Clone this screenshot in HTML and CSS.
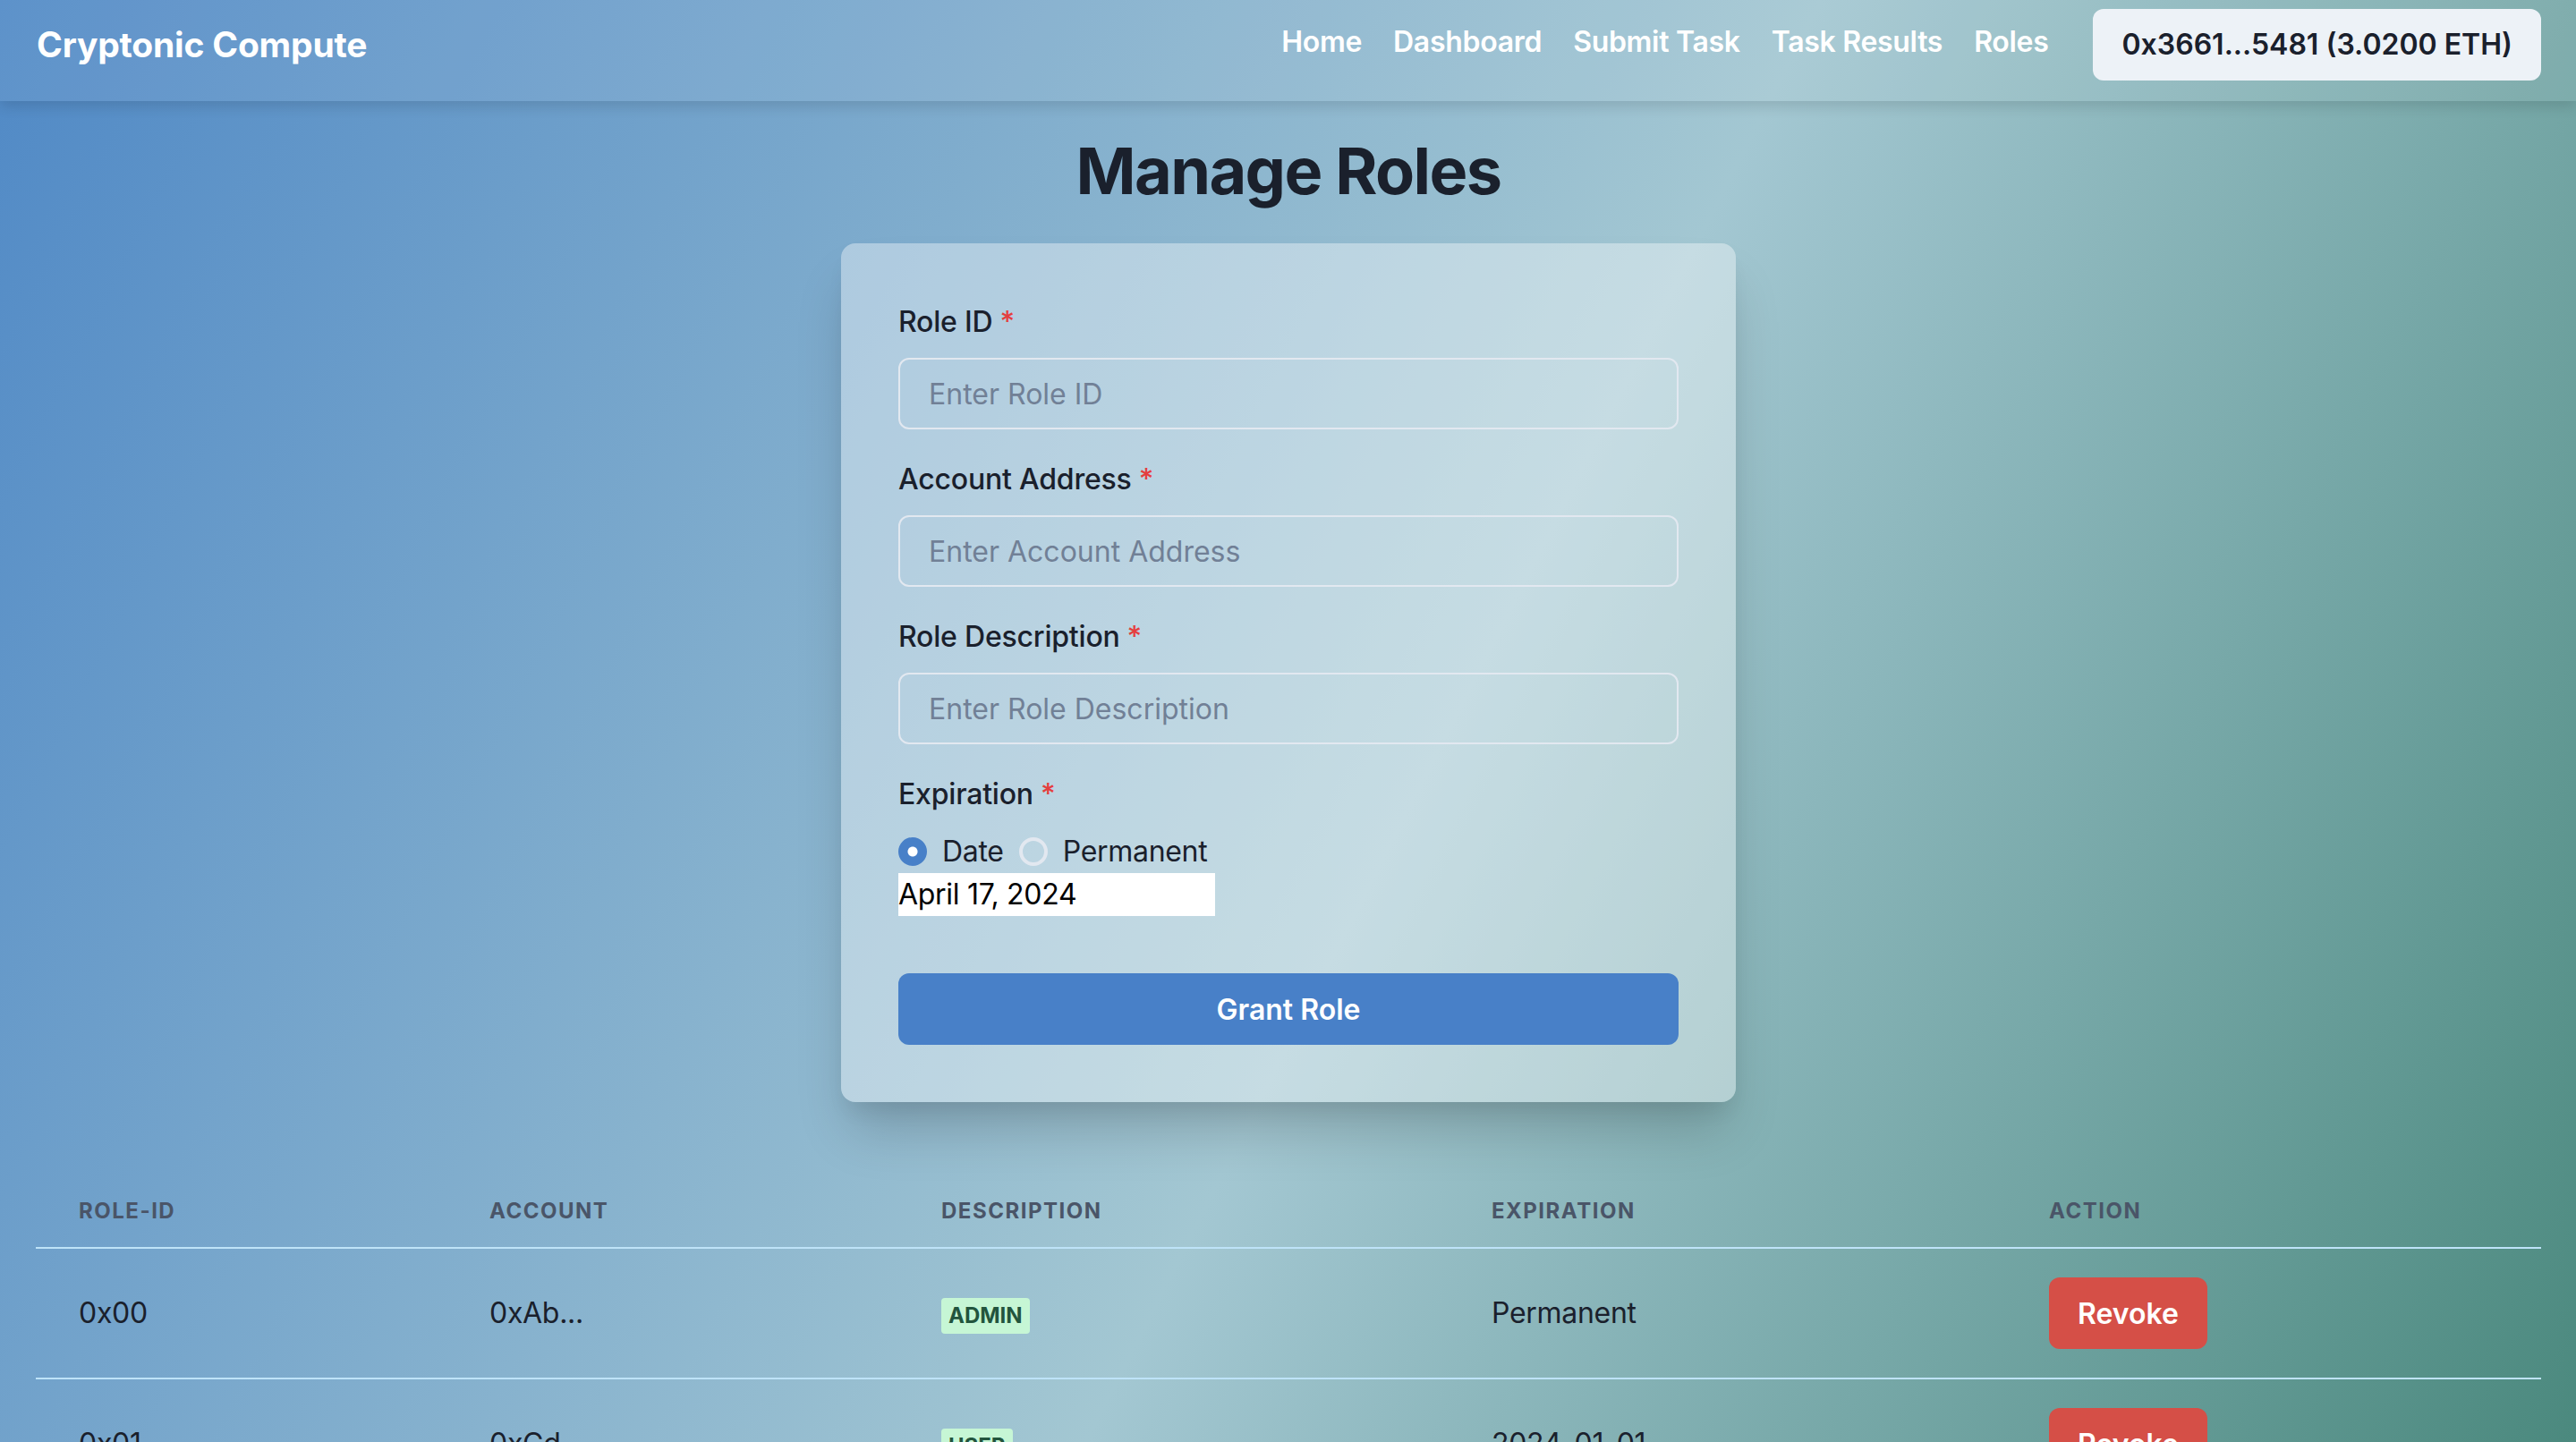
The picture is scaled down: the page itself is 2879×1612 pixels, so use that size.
FILE: index.html
```html
<!DOCTYPE html>
<html lang="en">
<head>
<meta charset="utf-8">
<title>Cryptonic Compute - Manage Roles</title>
<link rel="stylesheet" href="styles.css">
</head>
<body>
<header class="topbar">
  <div class="brand">Cryptonic Compute</div>
  <div class="topbar-right">
    <nav class="nav">
      <a class="nav-link" href="#">Home</a>
      <a class="nav-link" href="#">Dashboard</a>
      <a class="nav-link" href="#">Submit Task</a>
      <a class="nav-link" href="#">Task Results</a>
      <a class="nav-link" href="#">Roles</a>
    </nav>
    <button class="wallet-btn">0x3661...5481 (3.0200 ETH)</button>
  </div>
</header>

<main class="page">
  <h1 class="page-title">Manage Roles</h1>

  <form class="card">
    <div class="field">
      <label class="field-label">Role ID<span class="req">*</span></label>
      <input class="text-input" type="text" placeholder="Enter Role ID">
    </div>
    <div class="field">
      <label class="field-label">Account Address<span class="req">*</span></label>
      <input class="text-input" type="text" placeholder="Enter Account Address">
    </div>
    <div class="field">
      <label class="field-label">Role Description<span class="req">*</span></label>
      <input class="text-input" type="text" placeholder="Enter Role Description">
    </div>
    <div class="field">
      <label class="field-label">Expiration<span class="req">*</span></label>
      <div class="radio-row">
        <span class="radio-item"><span class="radio radio-checked"></span><span class="radio-text">Date</span></span>
        <span class="radio-item"><span class="radio"></span><span class="radio-text">Permanent</span></span>
      </div>
      <div class="date-input">April 17, 2024</div>
    </div>
    <button type="button" class="primary-btn">Grant Role</button>
  </form>

  <table class="roles-table">
    <colgroup>
      <col class="col-id">
      <col class="col-account">
      <col class="col-desc">
      <col class="col-exp">
      <col class="col-action">
    </colgroup>
    <thead>
      <tr>
        <th>Role-ID</th>
        <th>Account</th>
        <th>Description</th>
        <th>Expiration</th>
        <th>Action</th>
      </tr>
    </thead>
    <tbody>
      <tr>
        <td>0x00</td>
        <td>0xAb...</td>
        <td><span class="badge">Admin</span></td>
        <td>Permanent</td>
        <td><button type="button" class="revoke-btn">Revoke</button></td>
      </tr>
      <tr>
        <td>0x01</td>
        <td>0xCd...</td>
        <td><span class="badge">User</span></td>
        <td>2024-01-01</td>
        <td><button type="button" class="revoke-btn">Revoke</button></td>
      </tr>
    </tbody>
  </table>
</main>
</body>
</html>
```

FILE: styles.css
```css
* {
  box-sizing: border-box;
}

html, body {
  margin: 0;
  padding: 0;
}

body {
  min-height: 1612px;
  font-family: "Inter", "Noto Sans", "Liberation Sans", sans-serif;
  color: #1a202c;
  background: linear-gradient(117deg, #5089c6 0%, #a3c7d2 55%, #4b897e 100%);
  background-attachment: fixed;
  overflow: hidden;
}

/* ---------- top bar ---------- */
.topbar {
  display: flex;
  align-items: center;
  justify-content: space-between;
  height: 113px;
  padding: 10px 39px 24px 41px;
  background: rgba(255, 255, 255, 0.08);
  box-shadow: 0 6px 14px rgba(0, 0, 0, 0.12);
  position: relative;
  z-index: 2;
}

.brand {
  color: #ffffff;
  font-size: 39px;
  font-weight: 700;
  letter-spacing: -0.2px;
}

.topbar-right {
  display: flex;
  align-items: center;
}

.nav {
  display: flex;
  gap: 35px;
  margin-right: 50px;
  margin-bottom: 6px;
}

.nav-link {
  color: #ffffff;
  font-size: 32px;
  font-weight: 600;
  text-decoration: none;
  letter-spacing: -0.3px;
}

.wallet-btn {
  height: 80px;
  padding: 0 32px;
  border: none;
  border-radius: 12px;
  background: #edf2f7;
  color: #1a202c;
  font-family: inherit;
  font-size: 32px;
  font-weight: 600;
}

/* ---------- page ---------- */
.page {
  padding: 0 39px 0 40px;
}

.page-title {
  margin: 35px 0 38px;
  text-align: center;
  font-size: 72px;
  line-height: 1.2;
  font-weight: 700;
  color: #1a202c;
  letter-spacing: -1.6px;
}

/* ---------- card form ---------- */
.card {
  width: 1000px;
  margin: 0 auto;
  padding: 64px;
  display: flex;
  flex-direction: column;
  gap: 32px;
  background: rgba(255, 255, 255, 0.38);
  border-radius: 16px;
  box-shadow: 0 40px 60px -10px rgba(0, 0, 0, 0.18), 0 16px 24px -8px rgba(0, 0, 0, 0.08);
}

.field {
  display: flex;
  flex-direction: column;
  align-items: stretch;
}

.field-label {
  font-size: 32px;
  line-height: 48px;
  font-weight: 500;
  color: #1a202c;
  margin-bottom: 16px;
  letter-spacing: -0.2px;
}

.req {
  color: #e53e3e;
  margin-left: 8px;
}

.text-input {
  height: 80px;
  padding: 0 32px;
  border: 2px solid #e2e8f0;
  border-radius: 12px;
  background: transparent;
  font-family: inherit;
  font-size: 32px;
  color: #1a202c;
  outline: none;
}

.text-input::placeholder {
  color: #718096;
}

.radio-row {
  display: flex;
  align-items: center;
  gap: 17px;
  height: 48px;
}

.radio-item {
  display: flex;
  align-items: center;
  gap: 17px;
}

.radio {
  width: 32px;
  height: 32px;
  border-radius: 50%;
  border: 4px solid #e2e8f0;
  background: transparent;
  display: inline-block;
}

.radio-checked {
  border-color: #4880c8;
  background: radial-gradient(circle, #ffffff 0 5px, #4880c8 6px);
}

.radio-text {
  font-size: 32px;
  line-height: 48px;
  color: #1a202c;
  letter-spacing: -0.3px;
}

.date-input {
  width: 354px;
  height: 48px;
  line-height: 48px;
  background: #ffffff;
  font-size: 32px;
  color: #000000;
  padding: 0;
  letter-spacing: -0.3px;
}

.primary-btn {
  margin-top: 32px;
  height: 80px;
  border: none;
  border-radius: 12px;
  background: #4880c8;
  color: #ffffff;
  font-family: inherit;
  font-size: 32px;
  font-weight: 600;
}

/* ---------- table ---------- */
.roles-table {
  width: 100%;
  margin-top: 82px;
  border-collapse: collapse;
  table-layout: fixed;
}

.col-id { width: 459px; }
.col-account { width: 505px; }
.col-desc { width: 615px; }
.col-exp { width: 623px; }
.col-action { width: 598px; }

.roles-table th {
  padding: 24px 48px;
  text-align: left;
  font-size: 24px;
  line-height: 32px;
  font-weight: 700;
  letter-spacing: 1.5px;
  text-transform: uppercase;
  color: #4a5568;
  border-bottom: 2px solid #bee3f8;
}

.roles-table td {
  padding: 32px 48px;
  font-size: 32px;
  line-height: 48px;
  color: #1a202c;
  border-bottom: 2px solid #bee3f8;
  vertical-align: middle;
  letter-spacing: -0.3px;
}

.badge {
  display: inline-block;
  height: 40px;
  line-height: 40px;
  padding: 0 8px;
  border-radius: 4px;
  background: #c6f6d5;
  color: #22543d;
  font-size: 24px;
  font-weight: 700;
  text-transform: uppercase;
  vertical-align: middle;
  letter-spacing: 0;
}

.revoke-btn {
  height: 80px;
  padding: 0 32px;
  border: none;
  border-radius: 12px;
  background: #d54f47;
  color: #ffffff;
  font-family: inherit;
  font-size: 32px;
  font-weight: 600;
  vertical-align: middle;
}
```
